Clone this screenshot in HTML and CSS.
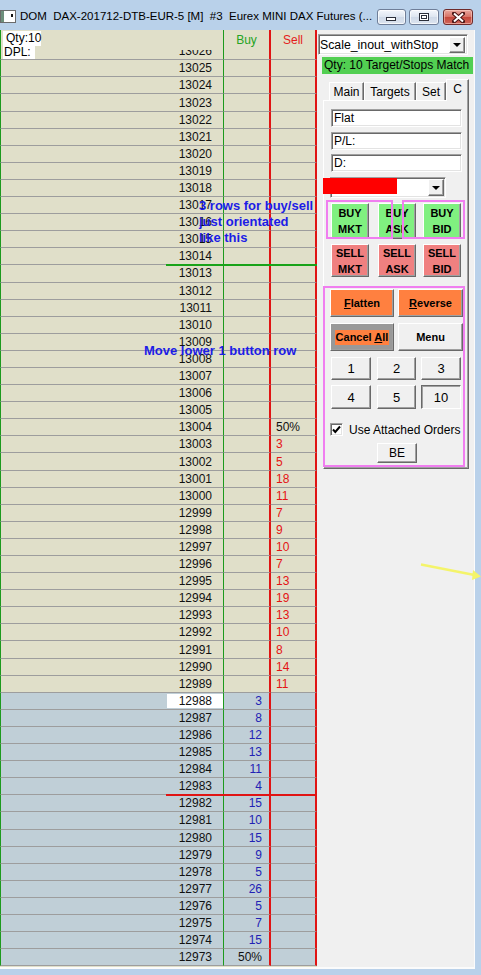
FILE: index.html
```html
<!DOCTYPE html>
<html>
<head>
<meta charset="utf-8">
<title>DOM</title>
<link rel="stylesheet" href="styles.css">
</head>
<body>
<div class="window">
  <div class="titlebar">
    <svg class="app-icon" width="16" height="13" viewBox="0 0 16 13"><rect x="0.5" y="0.5" width="15" height="12" fill="#fff" stroke="#6b6b6b"/><rect x="1" y="1" width="3" height="11" fill="#6d8f7c"/><rect x="11" y="4" width="2" height="3" fill="#111"/></svg>
    <div class="title">DOM  DAX-201712-DTB-EUR-5 [M]  #3  Eurex MINI DAX Futures (...</div>
    <div class="tbtns">
      <div class="tbtn tmin"><svg width="11" height="5" viewBox="0 0 11 5"><rect x="0.5" y="0.5" width="9" height="3" fill="#fff" stroke="#2b2f3a"/></svg></div>
      <div class="tbtn tmax"><svg width="11" height="9" viewBox="0 0 11 9"><rect x="0.5" y="0.5" width="9" height="7" fill="#fff" stroke="#2b2f3a"/><rect x="2.5" y="2.5" width="5" height="3" fill="#fff" stroke="#2b2f3a"/></svg></div>
      <div class="tbtn tclose"><svg width="13" height="11" viewBox="0 0 13 11"><path d="M2 1.5 L11 9.5 M11 1.5 L2 9.5" stroke="#4a1616" stroke-width="4" stroke-linecap="square"/><path d="M2 1.5 L11 9.5 M11 1.5 L2 9.5" stroke="#fff" stroke-width="2"/></svg></div>
    </div>
  </div>

  <div class="client">
    <div class="grid">
      <div class="hdr">
        <div class="cell px"></div>
        <div class="cell buy hbuy">Buy</div>
        <div class="cell sell hsell">Sell</div>
      </div>
      <div class="row ask cut"><div class="cell px"><span>13026</span></div><div class="cell buy"></div><div class="cell sell"></div></div>
      <div class="row ask"><div class="cell px">13025</div><div class="cell buy"></div><div class="cell sell"></div></div>
      <div class="row ask"><div class="cell px">13024</div><div class="cell buy"></div><div class="cell sell"></div></div>
      <div class="row ask"><div class="cell px">13023</div><div class="cell buy"></div><div class="cell sell"></div></div>
      <div class="row ask"><div class="cell px">13022</div><div class="cell buy"></div><div class="cell sell"></div></div>
      <div class="row ask"><div class="cell px">13021</div><div class="cell buy"></div><div class="cell sell"></div></div>
      <div class="row ask"><div class="cell px">13020</div><div class="cell buy"></div><div class="cell sell"></div></div>
      <div class="row ask"><div class="cell px">13019</div><div class="cell buy"></div><div class="cell sell"></div></div>
      <div class="row ask"><div class="cell px">13018</div><div class="cell buy"></div><div class="cell sell"></div></div>
      <div class="row ask"><div class="cell px">13017</div><div class="cell buy"></div><div class="cell sell"></div></div>
      <div class="row ask"><div class="cell px">13016</div><div class="cell buy"></div><div class="cell sell"></div></div>
      <div class="row ask"><div class="cell px">13015</div><div class="cell buy"></div><div class="cell sell"></div></div>
      <div class="row ask mark-green"><div class="cell px">13014</div><div class="cell buy"></div><div class="cell sell"></div></div>
      <div class="row ask"><div class="cell px">13013</div><div class="cell buy"></div><div class="cell sell"></div></div>
      <div class="row ask"><div class="cell px">13012</div><div class="cell buy"></div><div class="cell sell"></div></div>
      <div class="row ask"><div class="cell px">13011</div><div class="cell buy"></div><div class="cell sell"></div></div>
      <div class="row ask"><div class="cell px">13010</div><div class="cell buy"></div><div class="cell sell"></div></div>
      <div class="row ask"><div class="cell px">13009</div><div class="cell buy"></div><div class="cell sell"></div></div>
      <div class="row ask"><div class="cell px">13008</div><div class="cell buy"></div><div class="cell sell"></div></div>
      <div class="row ask"><div class="cell px">13007</div><div class="cell buy"></div><div class="cell sell"></div></div>
      <div class="row ask"><div class="cell px">13006</div><div class="cell buy"></div><div class="cell sell"></div></div>
      <div class="row ask"><div class="cell px">13005</div><div class="cell buy"></div><div class="cell sell"></div></div>
      <div class="row ask"><div class="cell px">13004</div><div class="cell buy"></div><div class="cell sell pct">50%</div></div>
      <div class="row ask"><div class="cell px">13003</div><div class="cell buy"></div><div class="cell sell">3</div></div>
      <div class="row ask"><div class="cell px">13002</div><div class="cell buy"></div><div class="cell sell">5</div></div>
      <div class="row ask"><div class="cell px">13001</div><div class="cell buy"></div><div class="cell sell">18</div></div>
      <div class="row ask"><div class="cell px">13000</div><div class="cell buy"></div><div class="cell sell">11</div></div>
      <div class="row ask"><div class="cell px">12999</div><div class="cell buy"></div><div class="cell sell">7</div></div>
      <div class="row ask"><div class="cell px">12998</div><div class="cell buy"></div><div class="cell sell">9</div></div>
      <div class="row ask"><div class="cell px">12997</div><div class="cell buy"></div><div class="cell sell">10</div></div>
      <div class="row ask"><div class="cell px">12996</div><div class="cell buy"></div><div class="cell sell">7</div></div>
      <div class="row ask"><div class="cell px">12995</div><div class="cell buy"></div><div class="cell sell">13</div></div>
      <div class="row ask"><div class="cell px">12994</div><div class="cell buy"></div><div class="cell sell">19</div></div>
      <div class="row ask"><div class="cell px">12993</div><div class="cell buy"></div><div class="cell sell">13</div></div>
      <div class="row ask"><div class="cell px">12992</div><div class="cell buy"></div><div class="cell sell">10</div></div>
      <div class="row ask"><div class="cell px">12991</div><div class="cell buy"></div><div class="cell sell">8</div></div>
      <div class="row ask"><div class="cell px">12990</div><div class="cell buy"></div><div class="cell sell">14</div></div>
      <div class="row ask"><div class="cell px">12989</div><div class="cell buy"></div><div class="cell sell">11</div></div>
      <div class="row bid"><div class="cell px"><span class="last">12988</span></div><div class="cell buy">3</div><div class="cell sell"></div></div>
      <div class="row bid"><div class="cell px">12987</div><div class="cell buy">8</div><div class="cell sell"></div></div>
      <div class="row bid"><div class="cell px">12986</div><div class="cell buy">12</div><div class="cell sell"></div></div>
      <div class="row bid"><div class="cell px">12985</div><div class="cell buy">13</div><div class="cell sell"></div></div>
      <div class="row bid"><div class="cell px">12984</div><div class="cell buy">11</div><div class="cell sell"></div></div>
      <div class="row bid mark-red"><div class="cell px">12983</div><div class="cell buy">4</div><div class="cell sell"></div></div>
      <div class="row bid"><div class="cell px">12982</div><div class="cell buy">15</div><div class="cell sell"></div></div>
      <div class="row bid"><div class="cell px">12981</div><div class="cell buy">10</div><div class="cell sell"></div></div>
      <div class="row bid"><div class="cell px">12980</div><div class="cell buy">15</div><div class="cell sell"></div></div>
      <div class="row bid"><div class="cell px">12979</div><div class="cell buy">9</div><div class="cell sell"></div></div>
      <div class="row bid"><div class="cell px">12978</div><div class="cell buy">5</div><div class="cell sell"></div></div>
      <div class="row bid"><div class="cell px">12977</div><div class="cell buy">26</div><div class="cell sell"></div></div>
      <div class="row bid"><div class="cell px">12976</div><div class="cell buy">5</div><div class="cell sell"></div></div>
      <div class="row bid"><div class="cell px">12975</div><div class="cell buy">7</div><div class="cell sell"></div></div>
      <div class="row bid"><div class="cell px">12974</div><div class="cell buy">15</div><div class="cell sell"></div></div>
      <div class="row bid"><div class="cell px">12973</div><div class="cell buy pct">50%</div><div class="cell sell"></div></div>

      <div class="qtylbl">Qty:10</div>
      <div class="dpllbl">DPL:</div>
    </div>

    <div class="panel">
      <div class="combo strat"><span class="combo-text">Scale_inout_withStop</span><span class="combo-btn"><i class="tri"></i></span></div>
      <div class="qtybar">Qty: 10 Target/Stops Match</div>
      <div class="tabs">
        <div class="tab t-main">Main</div>
        <div class="tab t-targets">Targets</div>
        <div class="tab t-set">Set</div>
        <div class="tab t-c sel">C</div>
      </div>
      <div class="tabbody">
        <div class="field">Flat</div>
        <div class="field">P/L:</div>
        <div class="field">D:</div>
        <div class="combo color"><span class="swatch"></span><span class="combo-text"></span><span class="combo-btn"><i class="tri"></i></span></div>

        <div class="btnrow buyrow">
          <div class="btn ord green">BUY<br>MKT</div>
          <div class="btn ord green">BUY<br>ASK</div>
          <div class="btn ord green">BUY<br>BID</div>
        </div>
        <div class="btnrow sellrow">
          <div class="btn ord red">SELL<br>MKT</div>
          <div class="btn ord red">SELL<br>ASK</div>
          <div class="btn ord red">SELL<br>BID</div>
        </div>

        <div class="btnrow bigrow first">
          <div class="btn big orange"><span><u>F</u>latten</span></div>
          <div class="btn big orange wide"><span><u>R</u>everse</span></div>
        </div>
        <div class="btnrow bigrow">
          <div class="btn big gray"><span class="hl">Cancel <u>A</u>ll</span></div>
          <div class="btn big wide">Menu</div>
        </div>

        <div class="btnrow numrow n1">
          <div class="btn num">1</div>
          <div class="btn num narrow">2</div>
          <div class="btn num">3</div>
        </div>
        <div class="btnrow numrow n2">
          <div class="btn num">4</div>
          <div class="btn num narrow">5</div>
          <div class="btn num down">10</div>
        </div>

        <div class="check">
          <span class="box"><svg width="9" height="9" viewBox="0 0 9 9"><path d="M1 4.5 L3.3 7 L8 1.5" fill="none" stroke="#000" stroke-width="2"/></svg></span>
          <span>Use Attached Orders</span>
        </div>
        <div class="btn be">BE</div>
      </div>
    </div>
  </div>

  <div class="annot">
    <div class="note note1">3 rows for buy/sell<br>just orientated<br>like this</div>
    <div class="note note2">Move lower 1 button row</div>
    <div class="pink pink1"></div>
    <div class="pink pink2"></div>
    <div class="pink pink3"></div>
    <svg class="arrow" width="70" height="30" viewBox="0 0 70 30"><path d="M6 9.5 L62 20.5" stroke="#f4f46a" stroke-width="2.5" fill="none"/><path d="M58 15 L66 21.5 L57 25 Z" fill="#f4f46a"/></svg>
  </div>
</div>
</body>
</html>
```
FILE: styles.css
```css
* { box-sizing: border-box; }

body {
  margin: 0;
  width: 481px;
  height: 975px;
  overflow: hidden;
  background: #b9d1ea;
  font-family: "Liberation Sans", Arial, sans-serif;
  font-size: 12px;
  color: #000;
}

.window {
  position: relative;
  width: 481px;
  height: 975px;
}

/* ---------- title bar ---------- */
.titlebar {
  height: 30px;
  display: flex;
  align-items: center;
}
.app-icon { flex: none; margin-top: 2px; }
.title {
  flex: 1;
  margin-left: 4px;
  margin-top: 2px;
  white-space: pre;
  font-size: 11.5px;
  line-height: 14px;
  color: #000;
}
.tbtns {
  display: flex;
  align-self: flex-start;
  margin-top: 9px;
  margin-right: 8px;
}
.tbtn {
  width: 30px;
  height: 16px;
  border: 1px solid #6f7e98;
  border-radius: 3px;
  background: linear-gradient(#f4f7fc, #dde5f0 50%, #cfd9e8 51%, #dce4ef);
  display: flex;
  align-items: center;
  justify-content: center;
  box-shadow: inset 0 0 0 1px rgba(255,255,255,0.7);
}
.tmin { width: 29px; align-items: flex-end; padding-bottom: 2px; }
.tmax { margin-left: 3px; }
.tclose {
  margin-left: 4px;
  border-color: #6e2a2a;
  background: linear-gradient(#e9a89f, #d77165 50%, #c4473b 51%, #d0675b);
  box-shadow: inset 0 0 0 1px rgba(255,220,210,0.5);
}

/* ---------- client ---------- */
.client {
  display: flex;
  width: 475px;
  height: 939px;
  border-right: 1px solid #fbfbfb;
  border-bottom: 2px solid #fbfbfb;
}

/* ---------- DOM grid ---------- */
.grid {
  position: relative;
  width: 317px;
  height: 937px;
  overflow: hidden;
  background: #e0dfc9;
  font-size: 12px;
}
.hdr { display: flex; height: 20px; }
.hdr .cell { border-bottom: none; justify-content: center; padding: 0; }
.hdr .hbuy { color: #23a323; }
.hdr .hsell { color: #e41b1b; }

.row { display: flex; height: 17.1px; position: relative; }
.row.cut { height: 10.3px; }
.ask { background: #e0dfc9; }
.bid { background: #c0cfd7; }

.cell {
  height: 100%;
  display: flex;
  align-items: center;
  border-bottom: 1px solid #9d9d9d;
  overflow: hidden;
  white-space: nowrap;
}
.px {
  width: 224px;
  border-left: 1px solid #1d9a1d;
  border-right: 1px solid #1d9a1d;
  justify-content: flex-end;
  padding-right: 11px;
  color: #111;
}
.buy {
  width: 47px;
  border-right: 2px solid #e01414;
  justify-content: flex-end;
  padding-right: 7px;
  color: #2222b4;
}
.sell {
  width: 46px;
  border-right: 2px solid #e01414;
  padding-left: 5px;
  color: #e41414;
}
.cell.pct { color: #111; }

.row.cut .cell { align-items: flex-end; }
.row.cut .px span { display: block; line-height: 16px; height: 16px; }

.px .last {
  display: flex;
  align-items: center;
  justify-content: flex-end;
  width: 56px;
  height: 14px;
  margin-right: -11px;
  margin-top: 1px;
  padding-right: 11px;
  background: #fff;
}

.mark-green, .mark-red { z-index: 1; }
.mark-green::after,
.mark-red::after {
  content: "";
  position: absolute;
  left: 166px;
  right: 0;
  bottom: -1px;
  height: 2px;
}
.mark-green::after { background: #19a319; }
.mark-red::after { background: #e01414; }

.qtylbl, .dpllbl {
  position: absolute;
  left: 3px;
  z-index: 2;
  background: #fff;
  line-height: 14px;
  font-size: 12px;
}
.qtylbl { top: 1px; width: 38px; height: 15px; padding-left: 3px; }
.dpllbl { top: 16px; width: 32px; height: 13px; padding-left: 1px; line-height: 13px; }

/* ---------- right panel ---------- */
.panel {
  width: 157px;
  height: 937px;
  background: #f0f0f0;
  display: flex;
  flex-direction: column;
}

.combo {
  position: relative;
  display: flex;
  align-items: center;
  background: #fff;
  border: 1px solid;
  border-color: #a0a0a0 #ffffff #ffffff #a0a0a0;
  box-shadow: inset 1px 1px 0 #696969, inset -1px -1px 0 #e3e3e3;
}
.combo-text { flex: 1; padding-left: 1px; white-space: nowrap; overflow: hidden; }
.combo-btn {
  width: 16px;
  height: 100%;
  background: #f0f0f0;
  border: 1px solid;
  border-color: #ffffff #696969 #696969 #ffffff;
  box-shadow: inset -1px -1px 0 #a0a0a0;
  display: flex;
  align-items: center;
  justify-content: center;
}
.tri {
  width: 0;
  height: 0;
  border-left: 4px solid transparent;
  border-right: 4px solid transparent;
  border-top: 4px solid #000;
}
.strat {
  margin: 4px 0 0 1px;
  width: 150px;
  height: 21px;
  font-size: 12.3px;
  padding: 2px 2px 2px 0;
}
.strat .combo-btn { height: 16px; }

.qtybar {
  margin: 2px 1px 0 5px;
  height: 17px;
  line-height: 17px;
  background: #52cf52;
  padding-left: 2px;
  font-size: 12px;
  white-space: nowrap;
}

.tabs {
  display: flex;
  align-items: flex-end;
  height: 21px;
  margin: 5px 0 0 12px;
}
.tab {
  height: 18px;
  border: 1px solid;
  border-bottom: none;
  border-color: #ffffff #696969 transparent #ffffff;
  box-shadow: inset -1px 0 0 #a0a0a0;
  display: flex;
  align-items: center;
  justify-content: center;
  font-size: 12px;
  padding-top: 1px;
}
.t-main { width: 35px; }
.t-targets { width: 52px; }
.t-set { width: 30px; }
.t-c { width: 23px; }
.tab.sel {
  align-items: flex-start;
  padding-top: 2px;
  background: #f0f0f0;
  position: relative;
  z-index: 1;
  margin-bottom: -1px;
  height: 22px;
}

.tabbody {
  position: relative;
  margin-left: 6px;
  width: 146px;
  height: 369px;
  border: 1px solid;
  border-color: #ffffff #696969 #696969 #ffffff;
  box-shadow: inset -1px -1px 0 #a0a0a0;
  padding: 8px 0 0 7px;
  display: flex;
  flex-direction: column;
  align-items: flex-start;
}

.field {
  width: 131px;
  height: 18px;
  margin-bottom: 4.5px;
  background: #fff;
  border: 1px solid;
  border-color: #a0a0a0 #ffffff #ffffff #a0a0a0;
  box-shadow: inset 1px 1px 0 #696969, inset -1px -1px 0 #e3e3e3;
  padding-left: 2px;
  line-height: 16px;
  font-size: 12px;
}

.color {
  margin: 0.5px 0 0 -1px;
  width: 116px;
  height: 21px;
  padding: 2px 1px 2px 0;
}
.color .combo-btn { height: 17px; }
.swatch {
  position: absolute;
  left: -8px;
  top: 0;
  width: 74px;
  height: 16px;
  background: #ff0000;
}

.btnrow { display: flex; }
.btn {
  display: flex;
  align-items: center;
  justify-content: center;
  text-align: center;
  background: #f0f0f0;
  border: 1px solid;
  border-color: #ffffff #696969 #696969 #ffffff;
  box-shadow: inset -1px -1px 0 #a0a0a0;
  white-space: nowrap;
}
.ord {
  width: 38px;
  font-weight: bold;
  font-size: 11px;
  line-height: 16px;
}
.ord + .ord { margin-left: 9px; }
.ord + .ord + .ord { margin-left: 7px; }
.buyrow { margin-top: 5px; }
.buyrow .ord { height: 36px; }
.sellrow { margin-top: 5px; }
.sellrow .ord { height: 33px; }
.green { background: #80f080; }
.red { background: #f08080; }

.bigrow { margin-top: 6px; margin-left: -1px; }
.bigrow.first { margin-top: 12px; }
.big {
  width: 64px;
  height: 28px;
  font-weight: bold;
  font-size: 11px;
}
.big.wide { width: 65px; margin-left: 4px; }
.orange { background: #ff8040; }
.gray { background: #999999; }
.hl {
  background: #ff8040;
  padding: 0 1px;
  line-height: 15px;
}

.numrow { margin-top: 6px; }
.numrow.n2 { margin-top: 5px; }
.num { width: 40px; height: 23px; font-size: 13px; }
.n2 .num { height: 24px; }
.num.narrow { width: 39px; margin-left: 6px; margin-right: 5px; }
.num.down {
  border-color: #696969 #ffffff #ffffff #696969;
  box-shadow: inset 1px 1px 0 #a0a0a0;
}

.check {
  display: flex;
  align-items: center;
  margin-top: 13px;
  margin-left: -1px;
  height: 15px;
  font-size: 12px;
}
.box {
  width: 13px;
  height: 13px;
  background: #fff;
  border: 1px solid;
  border-color: #a0a0a0 #ffffff #ffffff #a0a0a0;
  box-shadow: inset 1px 1px 0 #696969, inset -1px -1px 0 #e3e3e3;
  display: flex;
  align-items: center;
  justify-content: center;
  margin-right: 6px;
}
.be {
  margin: 6px 0 0 46px;
  width: 40px;
  height: 20px;
  font-size: 12px;
}

/* ---------- annotations drawn over the screenshot ---------- */
.annot {
  position: absolute;
  inset: 0;
  pointer-events: none;
  z-index: 5;
}
.note {
  position: absolute;
  color: #1c1ce6;
  font-weight: bold;
  font-size: 13px;
  line-height: 16px;
  white-space: nowrap;
}
.note1 { left: 199px; top: 198px; }
.note2 { left: 144px; top: 343px; }
.pink {
  position: absolute;
  border: 2px solid #f07ef0;
}
.pink1 { left: 326px; top: 200px; width: 67px; height: 39px; }
.pink2 { left: 402px; top: 200px; width: 63px; height: 39px; }
.pink3 { left: 323px; top: 286px; width: 142px; height: 181px; }
.arrow { position: absolute; left: 415px; top: 555px; }
```
